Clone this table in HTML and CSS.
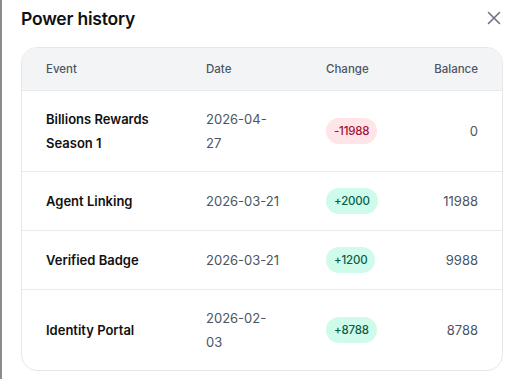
FILE: index.html
```html
<!DOCTYPE html>
<html lang="en">
<head>
<meta charset="utf-8">
<title>Power history</title>
<link rel="stylesheet" href="styles.css">
</head>
<body>
<div class="dialog">
  <div class="head">
    <h2 class="title">Power history</h2>
    <button class="close" aria-label="Close">
      <svg width="14" height="14" viewBox="0 0 14 14"><path d="M1.5 1.5L12.5 12.5M12.5 1.5L1.5 12.5" stroke="#6b7280" stroke-width="1.6" stroke-linecap="round" fill="none"/></svg>
    </button>
  </div>
  <div class="card">
    <div class="row hdr">
      <div class="c ev">Event</div>
      <div class="c dt">Date</div>
      <div class="c ch">Change</div>
      <div class="c bal">Balance</div>
    </div>
    <div class="row">
      <div class="c ev name">Billions Rewards Season 1</div>
      <div class="c dt date">2026-04-27</div>
      <div class="c ch"><span class="pill neg">-11988</span></div>
      <div class="c bal num">0</div>
    </div>
    <div class="row">
      <div class="c ev name">Agent Linking</div>
      <div class="c dt date">2026-03-21</div>
      <div class="c ch"><span class="pill pos">+2000</span></div>
      <div class="c bal num">11988</div>
    </div>
    <div class="row">
      <div class="c ev name">Verified Badge</div>
      <div class="c dt date">2026-03-21</div>
      <div class="c ch"><span class="pill pos">+1200</span></div>
      <div class="c bal num">9988</div>
    </div>
    <div class="row last">
      <div class="c ev name">Identity Portal</div>
      <div class="c dt date">2026-02-03</div>
      <div class="c ch"><span class="pill pos">+8788</span></div>
      <div class="c bal num">8788</div>
    </div>
  </div>
</div>
</body>
</html>
```
FILE: styles.css
```css
* { box-sizing: border-box; }
html, body { margin: 0; padding: 0; background: #fff; }
body {
  font-family: Inter, "Noto Sans", sans-serif;
  color: #111827;
  border-left: 2px solid #8c8c8c;
  min-height: 379px;
}
.dialog {
  padding: 5px 10px 0 19px;
}
.head {
  display: flex;
  align-items: center;
  justify-content: space-between;
  height: 26px;
  margin-bottom: 16px;
}
.title {
  margin: 0;
  font-size: 17.5px;
  font-weight: 600;
  letter-spacing: -0.2px;
  color: #111;
}
.close {
  border: 0;
  background: none;
  padding: 0;
  width: 14px;
  height: 14px;
  display: flex;
}
.card {
  border: 1px solid #e5e7eb;
  border-radius: 16px;
  overflow: hidden;
  width: 482px;
}
.row {
  display: grid;
  grid-template-columns: 160px 120px 1fr 80px;
  align-items: center;
  padding: 16px 24px;
  border-bottom: 1px solid #e9eaec;
  font-size: 13px;
  line-height: 24px;
}
.row.last { border-bottom: 0; }
.row.hdr {
  background: #f3f4f6;
  padding: 13px 24px;
  font-size: 11.5px;
  line-height: 16px;
  font-weight: 500;
  color: #4b5563;
}
.c { min-width: 0; }
.ev { padding-right: 30px; }
.dt { padding-right: 46px; }
.bal { text-align: right; }
.name { font-weight: 600; color: #111; }
.date, .num { color: #4b5563; }
.pill {
  display: inline-block;
  height: 26px;
  line-height: 26px;
  padding: 0 8px;
  border-radius: 13px;
  font-size: 11.5px;
  font-weight: 500;
  letter-spacing: -0.2px;
}
.neg { background: #ffe4e8; color: #9f1239; }
.pos { background: #cffbea; color: #065f46; }
```
